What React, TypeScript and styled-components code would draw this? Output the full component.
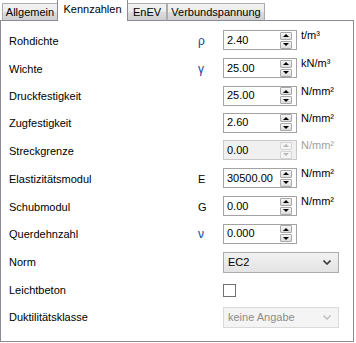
import styled, { createGlobalStyle } from "styled-components";

const GlobalStyle = createGlobalStyle`
  html, body {
    margin: 0;
    padding: 0;
    background: #ffffff;
  }
  body {
    font-family: "Liberation Sans", Arial, sans-serif;
    font-size: 11px;
    color: #000000;
  }
`;

type Field = {
  label: string;
  symbol?: string;
  greek?: boolean;
  value?: string;
  unit?: string;
  disabled?: boolean;
  kind: "spin" | "select" | "check";
  height: number;
};

const fields: Field[] = [
  { label: "Rohdichte", symbol: "ρ", greek: true, value: "2.40", unit: "t/m³", kind: "spin", height: 28 },
  { label: "Wichte", symbol: "γ", greek: true, value: "25.00", unit: "kN/m³", kind: "spin", height: 28 },
  { label: "Druckfestigkeit", value: "25.00", unit: "N/mm²", kind: "spin", height: 27 },
  { label: "Zugfestigkeit", value: "2.60", unit: "N/mm²", kind: "spin", height: 27 },
  { label: "Streckgrenze", value: "0.00", unit: "N/mm²", kind: "spin", disabled: true, height: 28 },
  { label: "Elastizitätsmodul", symbol: "E", value: "30500.00", unit: "N/mm²", kind: "spin", height: 28 },
  { label: "Schubmodul", symbol: "G", value: "0.00", unit: "N/mm²", kind: "spin", height: 28 },
  { label: "Querdehnzahl", symbol: "ν", greek: true, value: "0.000", kind: "spin", height: 27 },
  { label: "Norm", value: "EC2", kind: "select", height: 28 },
  { label: "Leichtbeton", kind: "check", height: 28 },
  { label: "Duktilitätsklasse", value: "keine Angabe", kind: "select", disabled: true, height: 27 },
];

const tabs = [
  { title: "Allgemein", width: 56 },
  { title: "Kennzahlen", width: 71, active: true },
  { title: "EnEV", width: 40 },
  { title: "Verbundspannung", width: 98 },
];

const Chevron = ({ color }: { color: string }) => (
  <svg width="8" height="5" viewBox="0 0 8 5">
    <path d="M0.5 0.5 L4 4 L7.5 0.5" fill="none" stroke={color} strokeWidth="1.6" />
  </svg>
);

const App = () => {
  return (
    <Window>
      <GlobalStyle />
      <TabStrip>
        {tabs.map((t) => (
          <Tab key={t.title} $active={!!t.active} $width={t.width}>
            {t.title}
          </Tab>
        ))}
      </TabStrip>
      <Panel>
        {fields.map((f) => (
          <Row key={f.label} $height={f.height}>
            <Label>{f.label}</Label>
            <Symbol $greek={!!f.greek}>{f.symbol}</Symbol>
            {f.kind === "spin" && (
              <FieldGroup>
                <SpinBox $disabled={!!f.disabled}>
                  <SpinText>{f.value}</SpinText>
                  <SpinButtons>
                    <SpinButton $disabled={!!f.disabled}>
                      <ArrowUp $disabled={!!f.disabled} />
                    </SpinButton>
                    <SpinButton $disabled={!!f.disabled}>
                      <ArrowDown $disabled={!!f.disabled} />
                    </SpinButton>
                  </SpinButtons>
                </SpinBox>
                {f.unit && <Unit $disabled={!!f.disabled}>{f.unit}</Unit>}
              </FieldGroup>
            )}
            {f.kind === "select" && (
              <ComboBox $disabled={!!f.disabled}>
                <ComboText>{f.value}</ComboText>
                <Chevron color={f.disabled ? "#c4c4c4" : "#3c3c3c"} />
              </ComboBox>
            )}
            {f.kind === "check" && <CheckBox />}
          </Row>
        ))}
      </Panel>
    </Window>
  );
};

const Window = styled.div`
  width: 356px;
  height: 343px;
  display: flex;
  flex-direction: column;
  background: #ffffff;
`;

const TabStrip = styled.div`
  display: flex;
  align-items: flex-end;
  height: 21px;
  padding-left: 2px;
  margin-bottom: -1px;
  position: relative;
  z-index: 1;
`;

const Tab = styled.div<{ $active: boolean; $width: number }>`
  box-sizing: border-box;
  width: ${(p) => p.$width}px;
  height: ${(p) => (p.$active ? 22 : 18)}px;
  margin-left: ${(p) => (p.$active ? -1 : 0)}px;
  margin-right: ${(p) => (p.$active ? -1 : 0)}px;
  padding-top: ${(p) => (p.$active ? 3 : 2)}px;
  border: 1px solid ${(p) => (p.$active ? "#898c95" : "#acacac")};
  border-bottom: ${(p) => (p.$active ? "none" : "1px solid #898c95")};
  background: ${(p) =>
    p.$active ? "#ffffff" : "linear-gradient(#f2f2f2 0%, #ebebeb 50%, #dddddd 51%, #cfcfcf 100%)"};
  text-align: center;
  line-height: 13px;
  font-size: 11px;
  color: #000000;
  white-space: nowrap;
  position: relative;
  z-index: ${(p) => (p.$active ? 2 : 1)};
`;

const Panel = styled.div`
  box-sizing: border-box;
  width: 354px;
  height: 322px;
  border: 1px solid #898c95;
  background: #ffffff;
  padding: 6px 0 0 8px;
  display: flex;
  flex-direction: column;
`;

const Row = styled.div<{ $height: number }>`
  display: flex;
  align-items: center;
  height: ${(p) => p.$height}px;
`;

const Label = styled.div`
  width: 189px;
  font-size: 11px;
  line-height: 13px;
`;

const Symbol = styled.div<{ $greek: boolean }>`
  width: 25px;
  font-size: ${(p) => (p.$greek ? 12 : 11)}px;
  line-height: 13px;
  color: ${(p) => (p.$greek ? "#1d3d8e" : "#000000")};
`;

const FieldGroup = styled.div`
  display: flex;
  align-items: flex-start;
  gap: 4px;
  margin-top: -2px;
`;

const SpinBox = styled.div<{ $disabled: boolean }>`
  box-sizing: border-box;
  width: 74px;
  height: 20px;
  border: 1px solid ${(p) => (p.$disabled ? "#c8c8c8" : "#a3a3a3")};
  background: ${(p) => (p.$disabled ? "#f0f0f0" : "#ffffff")};
  display: flex;
  align-items: center;
  padding: 0 4px 0 3px;
`;

const SpinText = styled.div`
  flex: 1;
  font-size: 11px;
  line-height: 13px;
`;

const SpinButtons = styled.div`
  display: flex;
  flex-direction: column;
  gap: 1px;
`;

const SpinButton = styled.div<{ $disabled: boolean }>`
  box-sizing: border-box;
  width: 12px;
  height: 8px;
  border: 1px solid ${(p) => (p.$disabled ? "#d6d6d6" : "#a8a8a8")};
  border-radius: 1px;
  background: ${(p) => (p.$disabled ? "#f4f4f4" : "linear-gradient(#f6f6f6, #dcdcdc)")};
  display: flex;
  align-items: center;
  justify-content: center;
`;

const ArrowUp = styled.div<{ $disabled: boolean }>`
  width: 0;
  height: 0;
  border-left: 3px solid transparent;
  border-right: 3px solid transparent;
  border-bottom: 3px solid ${(p) => (p.$disabled ? "#b8b8b8" : "#000000")};
`;

const ArrowDown = styled.div<{ $disabled: boolean }>`
  width: 0;
  height: 0;
  border-left: 3px solid transparent;
  border-right: 3px solid transparent;
  border-top: 3px solid ${(p) => (p.$disabled ? "#b8b8b8" : "#000000")};
`;

const Unit = styled.div<{ $disabled: boolean }>`
  font-size: 11px;
  line-height: 13px;
  margin-top: -1px;
  color: ${(p) => (p.$disabled ? "#a0a0a0" : "#000000")};
`;

const ComboBox = styled.div<{ $disabled: boolean }>`
  box-sizing: border-box;
  width: 116px;
  height: 21px;
  border: 1px solid ${(p) => (p.$disabled ? "#d9d9d9" : "#acacac")};
  background: ${(p) => (p.$disabled ? "#f4f4f4" : "linear-gradient(#f2f2f2, #e3e3e3)")};
  color: ${(p) => (p.$disabled ? "#8c8c8c" : "#000000")};
  display: flex;
  align-items: center;
  padding: 0 7px 0 4px;
  font-size: 11px;
  line-height: 13px;
`;

const ComboText = styled.span`
  flex: 1;
  text-align: left;
`;

const CheckBox = styled.div`
  box-sizing: border-box;
  width: 13px;
  height: 13px;
  border: 1px solid #707070;
  background: #ffffff;
`;

export default App;
